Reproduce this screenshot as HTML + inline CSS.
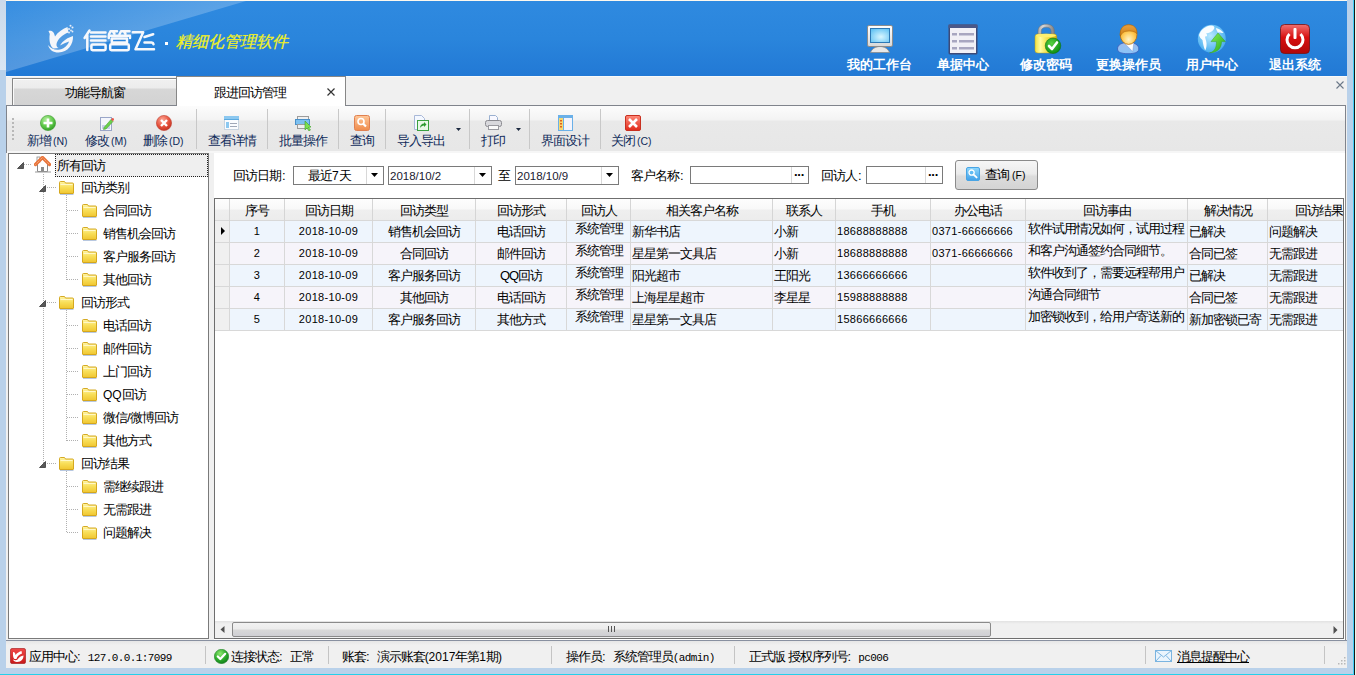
<!DOCTYPE html>
<html><head><meta charset="utf-8">
<style>
*{margin:0;padding:0;box-sizing:border-box}
html,body{width:1356px;height:675px;overflow:hidden;background:#f0f0f0;font-family:"Liberation Sans",sans-serif;font-size:12px;color:#000}
.a{position:absolute}
.t{position:absolute;line-height:12px;white-space:nowrap;font-size:13px;letter-spacing:-1px}
.L{letter-spacing:0}
.tb{font-size:10.5px;letter-spacing:0px;margin-left:2px}
.m{font-family:"Liberation Mono",monospace;font-size:11px;letter-spacing:-0.6px}
.d{font-family:"Liberation Sans",sans-serif;font-size:11px;letter-spacing:0.3px}
</style></head><body>
<!-- window strips -->
<div class="a" style="left:0;top:0;width:6px;height:675px;background:#b9d1ea"></div>
<div class="a" style="left:0;top:0;width:6px;height:70px;background:linear-gradient(#cad9ea,#d9e6f3)"></div>
<div class="a" style="left:1347px;top:0;width:9px;height:675px;background:#b9d1ea"></div>
<div class="a" style="left:1353px;top:0;width:1px;height:675px;background:#40d0f8"></div><div class="a" style="left:1354px;top:0;width:1px;height:675px;background:#181818"></div><div class="a" style="left:1355px;top:0;width:1px;height:675px;background:#e8f8ec"></div>
<div class="a" style="left:0;top:674px;width:1353px;height:1px;background:#24d0ea"></div>
<div class="a" style="left:6px;top:0;width:1341px;height:1px;background:#fdf8ee"></div>

<!-- header -->
<div id="hdr" class="a" style="left:6px;top:1px;width:1341px;height:75px;background:linear-gradient(#2f8ae0,#2a85dc 50%,#2279d5);overflow:hidden">
<svg class="a" style="left:0;top:0" width="1341" height="75">
<defs><linearGradient id="sh" gradientUnits="userSpaceOnUse" x1="120" y1="35.5" x2="100.7" y2="-29.8"><stop offset="0" stop-color="#fff" stop-opacity="0.22"/><stop offset="1" stop-color="#fff" stop-opacity="0.04"/></linearGradient></defs>
<polygon points="0,0 240,0 0,71" fill="url(#sh)"/>
</svg>
</div>

<!-- logo -->
<svg class="a" style="left:44px;top:22px" width="36" height="34" viewBox="0 0 36 34">
<path fill="#f4f6fa" d="M4.5,9 C7.5,8.2 10,9.5 11,14.5 C14,10 19,6.5 23.5,5 L24.5,10.5 C18.5,12.5 13.5,17 12.5,22 C12.3,24.5 13.3,25.8 15,26 L9.5,26.5 C6,24.5 4.8,18 5.8,12 Z"/>
<path fill="#f4f6fa" d="M16,23.5 C19,18.5 24,15.5 29,14 C29.5,22 24,30.5 14.5,30.5 C9,30.5 5.5,28 4,23 C7,27 11,28.2 16,27.5 C21,26.5 24,22.5 25,19.5 C22,20.5 19,22 16,23.5 Z"/>
<circle cx="26.5" cy="3.8" r="1" fill="#e8eef8"/><circle cx="28.5" cy="5.5" r="1" fill="#e8eef8"/><circle cx="25" cy="7" r="1" fill="#e8eef8"/><circle cx="27" cy="8.5" r="0.9" fill="#e8eef8"/><circle cx="28.5" cy="9.5" r="0.9" fill="#e8eef8"/><circle cx="25" cy="10.5" r="0.9" fill="#e8eef8"/>
</svg>
<svg class="a" style="left:80px;top:26px" width="80" height="28" viewBox="0 0 80 28">
<g fill="none" stroke="#f6f8fc" stroke-width="2.5" stroke-linecap="round" stroke-linejoin="round">
<path d="M9.5,4.5 L4.6,12"/><path d="M7.3,9.5 V24"/>
<path d="M11,6.5 H25.5 M11,10.5 H25.5 M11,14.4 H25.5"/>
<rect x="11.4" y="18.4" width="14.2" height="5.8" rx="1.2"/>
<path d="M29,8.2 L30.5,5.2 H37 M33,5.5 L34.5,8"/>
<path d="M39.5,8.2 L41,5.2 H49.5 M44,5.5 L45.5,8"/>
<path d="M28.8,12 V9.8 H50 V12"/>
<path d="M31.8,12.6 H47 V16.6 H31.8 Z"/>
<rect x="30.2" y="18.2" width="18.6" height="6" rx="1.2"/>
<path d="M52.8,6.2 H63.2 L55.5,23.3 H74"/>
<path d="M64.5,11 L73.2,8.2"/><path d="M64.5,16.6 L71.5,16.6 Q73.3,16.8 73.5,18.2"/>
</g></svg>
<div class="a" style="left:165px;top:42px;width:3px;height:3px;background:#fff"></div>
<div class="t" style="left:176px;top:34px;font-size:16px;line-height:16px;color:#f2f21e;font-style:italic;letter-spacing:0;-webkit-text-stroke:0.25px #f2f21e">精细化管理软件</div>

<!-- header buttons -->
<svg class="a" style="left:864px;top:23px" width="32" height="32" viewBox="0 0 32 32">
<defs><radialGradient id="scr" cx="0.55" cy="0.6" r="0.7"><stop offset="0" stop-color="#d8f6ff"/><stop offset="1" stop-color="#66c4f4"/></radialGradient>
<linearGradient id="frm" x1="0" y1="0" x2="0" y2="1"><stop offset="0" stop-color="#ffffff"/><stop offset="1" stop-color="#d8d8d8"/></linearGradient></defs>
<path d="M6.5,29.5 C8,25.5 12,23.5 16,23.5 C20,23.5 24,25.5 25.5,29.5 Z" fill="#e8e8e8" stroke="#8a8a8a" stroke-width="0.8"/>
<rect x="3.5" y="2.5" width="25" height="21" rx="1.5" fill="url(#frm)" stroke="#8c8c8c"/>
<rect x="6" y="5" width="20" height="15" fill="#2c79b6"/>
<rect x="7" y="6" width="18" height="13" fill="url(#scr)"/>
</svg>
<div class="t" style="left:847px;top:59px;color:#fff;font-weight:bold;letter-spacing:0px">我的工作台</div>

<svg class="a" style="left:947px;top:23px" width="32" height="32" viewBox="0 0 32 32">
<rect x="1.5" y="1.5" width="29" height="30" rx="1.5" fill="#3d4a78"/>
<rect x="3" y="5" width="26" height="25" fill="#f1f0f6"/>
<rect x="5" y="10" width="5" height="2.5" fill="#a8a6c0"/><rect x="12" y="10" width="15" height="2.5" fill="#a8a6c0"/>
<rect x="5" y="17" width="5" height="2.5" fill="#a8a6c0"/><rect x="12" y="17" width="15" height="2.5" fill="#a8a6c0"/>
<rect x="5" y="24" width="5" height="2.5" fill="#a8a6c0"/><rect x="12" y="24" width="15" height="2.5" fill="#a8a6c0"/>
<rect x="1.5" y="1.5" width="29" height="3.5" fill="#4b5888"/>
</svg>
<div class="t" style="left:937px;top:59px;color:#fff;font-weight:bold;letter-spacing:0px">单据中心</div>

<svg class="a" style="left:1032px;top:23px" width="32" height="32" viewBox="0 0 32 32">
<defs><linearGradient id="lk" x1="0" y1="0" x2="1" y2="0"><stop offset="0" stop-color="#f0e040"/><stop offset="0.25" stop-color="#fffca0"/><stop offset="0.6" stop-color="#f2dc40"/><stop offset="1" stop-color="#d8b010"/></linearGradient>
<linearGradient id="shk" x1="0" y1="0" x2="1" y2="0"><stop offset="0" stop-color="#a8a8a8"/><stop offset="0.3" stop-color="#d8d8d8"/><stop offset="1" stop-color="#808080"/></linearGradient>
<radialGradient id="gc" cx="0.4" cy="0.35" r="0.7"><stop offset="0" stop-color="#58d040"/><stop offset="1" stop-color="#0a8a10"/></radialGradient></defs>
<path d="M6,14 L6,8.5 C6,3.5 9.5,1.2 14.2,1.2 C19,1.2 22.4,3.5 22.4,8.5 L22.4,14 L19.2,14 L19.2,8.5 C19.2,5.5 17.5,4.2 14.2,4.2 C11,4.2 9.2,5.5 9.2,8.5 L9.2,14 Z" fill="url(#shk)" stroke="#707070" stroke-width="0.5"/>
<path d="M3,13.5 Q3,11 6,11 L22,11 Q24.7,11 24.7,13.5 L24.7,27.5 Q24.7,30 22,30 L6,30 Q3,30 3,27.5 Z" fill="url(#lk)" stroke="#c0a010" stroke-width="0.5"/>
<ellipse cx="14" cy="12.5" rx="10" ry="1.8" fill="#fff070"/>
<circle cx="21" cy="22.8" r="7.8" fill="url(#gc)" stroke="#0a6a10" stroke-width="0.5"/>
<path d="M17,23 L20,26 L25,19.5" fill="none" stroke="#fff" stroke-width="2.6" stroke-linecap="round" stroke-linejoin="round"/>
</svg>
<div class="t" style="left:1020px;top:59px;color:#fff;font-weight:bold;letter-spacing:0px">修改密码</div>

<svg class="a" style="left:1112px;top:23px" width="32" height="32" viewBox="0 0 32 32">
<defs><radialGradient id="fc" cx="0.5" cy="0.75" r="0.65"><stop offset="0" stop-color="#fff4c8"/><stop offset="0.6" stop-color="#ffc850"/><stop offset="1" stop-color="#f0a020"/></radialGradient>
<linearGradient id="bd" x1="0" y1="0" x2="0" y2="1"><stop offset="0" stop-color="#a0bcec"/><stop offset="1" stop-color="#88c4f8"/></linearGradient>
<linearGradient id="hr" x1="0" y1="0" x2="0" y2="1"><stop offset="0" stop-color="#e8a040"/><stop offset="1" stop-color="#d08010"/></linearGradient></defs>
<path d="M5.5,26 C5.5,21.5 10,19.5 16,19.5 C22,19.5 26.8,21.5 26.8,26 C26.8,29.5 22,30.7 16,30.7 C10,30.7 5.5,29.5 5.5,26 Z" fill="url(#bd)" stroke="#3a5ab8" stroke-width="0.8"/>
<path d="M12.3,20 L21.8,20 L20.7,28.5 Z" fill="#fff" stroke="#6a8ad0" stroke-width="0.4"/>
<ellipse cx="16.6" cy="11.6" rx="8.4" ry="9.8" fill="url(#fc)" stroke="#b87010" stroke-width="0.8"/>
<path d="M8.3,13 C7.5,5 11.5,1.8 16.6,1.8 C22,1.8 25.2,5 25,10.5 C23,8.5 19,7.5 15,8.2 C12,8 10,10 8.3,13 Z" fill="url(#hr)" stroke="#a86008" stroke-width="0.5"/>
</svg>
<div class="t" style="left:1096px;top:59px;color:#fff;font-weight:bold;letter-spacing:0px">更换操作员</div>

<svg class="a" style="left:1196px;top:23px" width="32" height="32" viewBox="0 0 32 32">
<defs><radialGradient id="gl" cx="0.45" cy="0.4" r="0.7"><stop offset="0" stop-color="#b8e8ff"/><stop offset="0.7" stop-color="#5cb8f2"/><stop offset="1" stop-color="#3a9ee8"/></radialGradient>
<linearGradient id="ar" x1="0" y1="0" x2="1" y2="1"><stop offset="0" stop-color="#8cf05a"/><stop offset="1" stop-color="#20a818"/></linearGradient></defs>
<circle cx="15.8" cy="15.8" r="14" fill="url(#gl)"/>
<path d="M3,12 C5,6 10,3 15,2.5 C18,2.5 19,4 18,6 C16,9 13,10 10,10.5 C12,12 11,14 9,13.5 C9.5,17 11,19 10.5,23 C10,26 9.5,27.5 9,27 C7.5,24 7,20 6.5,17 C5,16 3.5,14 3,12 Z" fill="#fff" opacity="0.95"/>
<path d="M20,5 C23,5.5 26,7.5 27.5,10 C26,10.5 24,9 22,9.5 C21,8 20,6.5 20,5 Z" fill="#fff" opacity="0.9"/>
<path d="M13.5,29.8 C19,29 20.5,24 20.5,18.6 L15,18.6 L22,10 L29.4,18.6 L25.5,18.6 C25.5,25 22,29.5 13.5,29.8 Z" fill="url(#ar)" stroke="#3aa024" stroke-width="0.5"/>
</svg>
<div class="t" style="left:1186px;top:59px;color:#fff;font-weight:bold;letter-spacing:0px">用户中心</div>

<svg class="a" style="left:1279px;top:23px" width="32" height="32" viewBox="0 0 32 32">
<defs><linearGradient id="pw" x1="0" y1="0" x2="0" y2="1"><stop offset="0" stop-color="#f07070"/><stop offset="0.45" stop-color="#d81010"/><stop offset="1" stop-color="#b00808"/></linearGradient></defs>
<rect x="1.5" y="1.5" width="29" height="29" rx="4" fill="url(#pw)" stroke="#7a1010" stroke-width="0.8"/>
<path d="M10.5,11 A8,8 0 1 0 21.5,11" fill="none" stroke="#fff" stroke-width="3"/>
<rect x="14.5" y="5" width="3" height="11" rx="1" fill="#fff"/>
</svg>
<div class="t" style="left:1269px;top:59px;color:#fff;font-weight:bold;letter-spacing:0px">退出系统</div>

<!-- tabs -->
<div class="a" style="left:6px;top:76px;width:1341px;height:1px;background:#f9f9f9"></div>
<div class="a" style="left:12px;top:78px;width:165px;height:28px;border:1px solid #878787;border-bottom:none;background:linear-gradient(#f0f0f0 0,#ececec 9px,#d7d7d7 10px,#d2d2d2 27px)">
 <div class="a" style="left:0;top:0;width:163px;height:1px;background:#fff"></div>
 <div class="a" style="left:0;top:0;width:1px;height:27px;background:#fafafa"></div>
</div>
<div class="t" style="left:65px;top:87px">功能导航窗</div>
<div class="a" style="left:176px;top:76px;width:170px;height:30px;border:1px solid #878787;border-bottom:none;background:#fff"></div>
<div class="t" style="left:214px;top:87px">跟进回访管理</div>
<svg class="a" style="left:326px;top:87px" width="10" height="10"><path d="M1.5,1.5 L8.5,8.5 M8.5,1.5 L1.5,8.5" stroke="#333" stroke-width="1.2"/></svg>
<svg class="a" style="left:1335px;top:80px" width="10" height="10"><path d="M1.5,1.5 L8.5,8.5 M8.5,1.5 L1.5,8.5" stroke="#6b7888" stroke-width="1.1"/></svg>

<!-- toolbar -->
<div class="a" style="left:6px;top:105px;width:1340px;height:48px;border:1px solid #80848c;border-bottom:none;background:linear-gradient(#fcfcfc 0,#f3f3f3 14px,#e9e9e9 15px,#e7e7e7 45px)"></div>
<div class="a" style="left:177px;top:105px;width:168px;height:1px;background:#fff"></div>
<div class="a" style="left:7px;top:151px;width:1338px;height:2px;background:#f6f6f6"></div>
<div class="a" style="left:12px;top:118px;width:2px;height:24px;background:repeating-linear-gradient(#b8b8b8 0,#b8b8b8 2px,transparent 2px,transparent 4px)"></div>
<div class="a" style="left:196px;top:109px;width:1px;height:40px;background:#c8c8c8"></div>
<div class="a" style="left:267px;top:109px;width:1px;height:40px;background:#c8c8c8"></div>
<div class="a" style="left:338px;top:109px;width:1px;height:40px;background:#c8c8c8"></div>
<div class="a" style="left:385px;top:109px;width:1px;height:40px;background:#c8c8c8"></div>
<div class="a" style="left:469px;top:109px;width:1px;height:40px;background:#c8c8c8"></div>
<div class="a" style="left:529px;top:109px;width:1px;height:40px;background:#c8c8c8"></div>
<div class="a" style="left:600px;top:109px;width:1px;height:40px;background:#c8c8c8"></div>

<!-- toolbar buttons -->
<svg class="a" style="left:40px;top:115px" width="16" height="16" viewBox="0 0 16 16">
<defs><radialGradient id="gp" cx="0.4" cy="0.3" r="0.75"><stop offset="0" stop-color="#b6f0a0"/><stop offset="0.6" stop-color="#5cc646"/><stop offset="1" stop-color="#2f9a24"/></radialGradient></defs>
<circle cx="8" cy="8" r="7.6" fill="url(#gp)" stroke="#3a9a2c" stroke-width="0.6"/>
<path d="M8,3.5 V12.5 M3.5,8 H12.5" stroke="#fff" stroke-width="2.6"/>
</svg>
<svg class="a" style="left:99px;top:116px" width="16" height="16" viewBox="0 0 16 16">
<rect x="1.5" y="1.5" width="11" height="13" fill="#f4f6fc" stroke="#9aa6c8"/>
<rect x="3" y="9" width="8" height="4" fill="#c8d0ea"/>
<path d="M5,11.5 L12,3.5 L14,5.5 L7,13 L4.5,13.5 Z" fill="#6cd04c" stroke="#3c9a2a" stroke-width="0.5"/>
<path d="M12,3.5 L13,2.3 Q14,1.6 14.8,2.6 Q15.4,3.5 14.6,4.3 L14,5.5 Z" fill="#e8584a"/>
</svg>
<svg class="a" style="left:156px;top:115px" width="16" height="16" viewBox="0 0 16 16">
<defs><radialGradient id="rd" cx="0.4" cy="0.3" r="0.75"><stop offset="0" stop-color="#ffa898"/><stop offset="0.6" stop-color="#e4503a"/><stop offset="1" stop-color="#c03020"/></radialGradient></defs>
<circle cx="8" cy="8" r="7.6" fill="url(#rd)" stroke="#c04030" stroke-width="0.6"/>
<path d="M5,5 L11,11 M11,5 L5,11" stroke="#fff" stroke-width="2.4"/>
</svg>
<svg class="a" style="left:223px;top:115px" width="16" height="16" viewBox="0 0 16 16">
<rect x="1.5" y="1.5" width="14" height="13" fill="#fafcff" stroke="#c8d4e0"/>
<rect x="1" y="1" width="15" height="4" fill="#8cc8f0"/><rect x="1" y="4" width="15" height="1" fill="#5aaae0"/>
<rect x="3" y="7" width="3" height="6" fill="#8cc8f0"/>
<rect x="7" y="8" width="7" height="1" fill="#a0a8b8"/><rect x="7" y="11" width="7" height="1" fill="#a0a8b8"/>
</svg>
<svg class="a" style="left:295px;top:115px" width="17" height="16" viewBox="0 0 17 16">
<rect x="2.5" y="1.5" width="11" height="4" fill="#f0f0f0" stroke="#9c9c9c"/>
<rect x="0.5" y="4.5" width="14" height="5" fill="#7cc0f0" stroke="#4a90c8"/>
<rect x="2.5" y="9.5" width="11" height="4" fill="#f0f0f0" stroke="#9c9c9c"/>
<path d="M10,6 L10,15 L12,13 L14,16 L15.5,15 L13.5,12.5 L16,12 Z" fill="#7ce050" stroke="#3aa02a" stroke-width="0.6"/>
</svg>
<svg class="a" style="left:354px;top:115px" width="16" height="16" viewBox="0 0 16 16">
<defs><linearGradient id="og" x1="0" y1="0" x2="0" y2="1"><stop offset="0" stop-color="#ffc89a"/><stop offset="1" stop-color="#ef8a4a"/></linearGradient></defs>
<rect x="0.5" y="0.5" width="15" height="15" rx="2" fill="url(#og)" stroke="#e08050"/>
<circle cx="7" cy="6.5" r="3" fill="none" stroke="#fff" stroke-width="1.6"/>
<path d="M9,8.5 L12,11.5" stroke="#fff" stroke-width="2.2"/>
</svg>
<svg class="a" style="left:413px;top:115px" width="16" height="16" viewBox="0 0 16 16">
<path d="M1.5,0.5 H8.5 L11.5,3.5 V14.5 H1.5 Z" fill="#f4f8ff" stroke="#a8b8d8"/>
<rect x="4.5" y="5.5" width="11" height="10" fill="#e8f8e8" stroke="#3aa040"/>
<path d="M7,13 C7,10 9,8.5 11,8.5 V7 L13.5,9.5 L11,12 V10.5 C9.5,10.5 8,11.5 7,13 Z" fill="#2c9a30"/>
</svg>
<svg class="a" style="left:456px;top:128px" width="6" height="3"><path d="M0,0 H5 L2.5,3 Z" fill="#1d2a40"/></svg>
<svg class="a" style="left:485px;top:115px" width="17" height="16" viewBox="0 0 17 16">
<path d="M4.5,0.5 H10.5 L12.5,2.5 V6 H4.5 Z" fill="#f8f8ff" stroke="#9ab0d0"/>
<rect x="0.5" y="5.5" width="16" height="6" rx="2" fill="#d8d8dc" stroke="#8a8a90"/>
<rect x="3.5" y="10.5" width="10" height="4" fill="#fafafa" stroke="#9a9aa0"/>
</svg>
<svg class="a" style="left:516px;top:128px" width="6" height="3"><path d="M0,0 H5 L2.5,3 Z" fill="#1d2a40"/></svg>
<svg class="a" style="left:558px;top:115px" width="16" height="16" viewBox="0 0 16 16">
<rect x="0.5" y="0.5" width="14" height="15" fill="#f4f4fc" stroke="#6ab0e8"/>
<rect x="1" y="1" width="13" height="2" fill="#6ab0e8"/>
<rect x="1" y="3" width="4" height="12" fill="#f8d870"/>
<rect x="2" y="5" width="2" height="1.5" fill="#e06020"/><rect x="2" y="8" width="2" height="1.5" fill="#e06020"/><rect x="2" y="11" width="2" height="1.5" fill="#e06020"/>
<rect x="5" y="3" width="1" height="12" fill="#6ab0e8"/>
</svg>
<svg class="a" style="left:625px;top:115px" width="16" height="16" viewBox="0 0 16 16">
<defs><linearGradient id="cx" x1="0" y1="0" x2="0" y2="1"><stop offset="0" stop-color="#ff8a7a"/><stop offset="1" stop-color="#e02a1a"/></linearGradient></defs>
<rect x="0.5" y="0.5" width="15" height="15" rx="1.5" fill="url(#cx)" stroke="#c83020"/>
<path d="M4,4 L12,12 M12,4 L4,12" stroke="#fff" stroke-width="2.6"/>
</svg>
<div class="t" style="left:27px;top:135px;color:#0f2b5a">新增<span class="tb">(N)</span></div>
<div class="t" style="left:85px;top:135px;color:#0f2b5a">修改<span class="tb">(M)</span></div>
<div class="t" style="left:143px;top:135px;color:#0f2b5a">删除<span class="tb">(D)</span></div>
<div class="t" style="left:208px;top:135px;color:#0f2b5a">查看详情</div>
<div class="t" style="left:279px;top:135px;color:#0f2b5a">批量操作</div>
<div class="t" style="left:350px;top:135px;color:#0f2b5a">查询</div>
<div class="t" style="left:397px;top:135px;color:#0f2b5a">导入导出</div>
<div class="t" style="left:481px;top:135px;color:#0f2b5a">打印</div>
<div class="t" style="left:541px;top:135px;color:#0f2b5a">界面设计</div>
<div class="t" style="left:611px;top:135px;color:#0f2b5a">关闭<span class="tb">(C)</span></div>

<!-- tree panel -->
<svg width="0" height="0" style="position:absolute"><defs><linearGradient id="fd" x1="0" y1="0" x2="0" y2="1"><stop offset="0" stop-color="#fff5a8"/><stop offset="0.5" stop-color="#f8de58"/><stop offset="1" stop-color="#f0c630"/></linearGradient></defs></svg>
<div class="a" style="left:8px;top:153px;width:201px;height:486px;border:1px solid #7a7a7a;background:#fff"></div>
<div class="a" style="left:55px;top:154px;width:153px;height:23px;border:1px dotted #202020;background:#efefef"></div>
<svg class="a" style="left:34px;top:156px" width="17" height="17" viewBox="0 0 17 17">
<path d="M3.5,6 V15.5 H13.5 V6" fill="#fff" stroke="#8a8a8a"/>
<rect x="7" y="11" width="3" height="5" fill="#8a8a8a"/>
<rect x="3" y="1" width="3" height="5" fill="#fff" stroke="#8a8a8a" stroke-width="0.8"/>
<path d="M1.5,8.5 L8.5,1.5 L15.5,8.5" fill="none" stroke="#e8743a" stroke-width="3.2" stroke-linejoin="round" stroke-linecap="round"/>
<path d="M1.5,8.5 L8.5,1.5 L15.5,8.5" fill="none" stroke="#ffb890" stroke-width="1" stroke-dasharray="1 1"/>
<rect x="1" y="15.5" width="16" height="1" fill="#9a9a9a"/>
</svg>
<div class="t" style="left:57px;top:160px">所有回访</div>
<svg class="a" style="left:17px;top:162px" width="7" height="7"><path d="M6.5,0.5 V6.5 H0.5 Z" fill="#595959" stroke="#3a3a3a" stroke-width="0.8" stroke-linejoin="round"/></svg><div class="a" style="left:24px;top:164px;width:8px;height:1px;background:repeating-linear-gradient(90deg,#b0b0b0 0,#b0b0b0 1px,transparent 1px,transparent 2px)"></div>
<div class="a" style="left:43px;top:174px;width:1px;height:290px;background:repeating-linear-gradient(#b0b0b0 0,#b0b0b0 1px,transparent 1px,transparent 2px)"></div>
<svg class="a" style="left:39px;top:185px" width="7" height="7"><path d="M6.5,0.5 V6.5 H0.5 Z" fill="#595959" stroke="#3a3a3a" stroke-width="0.8" stroke-linejoin="round"/></svg><div class="a" style="left:47px;top:187px;width:9px;height:1px;background:repeating-linear-gradient(90deg,#b0b0b0 0,#b0b0b0 1px,transparent 1px,transparent 2px)"></div>
<svg class="a" style="left:59px;top:181px" width="15" height="14" viewBox="0 0 15 14"><defs></defs><path d="M0.5,1.5 Q0.5,0.5 1.5,0.5 H5.5 L6.5,2 H13.5 Q14.5,2 14.5,3 V12 Q14.5,12.5 14,12.5 H1 Q0.5,12.5 0.5,12 Z" fill="url(#fd)" stroke="#d0a010" stroke-width="0.9"/><rect x="1.5" y="3" width="12" height="1" fill="#fff8c8"/><rect x="1" y="13" width="13.5" height="1" fill="#b8c8e0"/></svg><div class="t" style="left:81px;top:182px">回访类别</div>
<div class="a" style="left:67px;top:210px;width:12px;height:1px;background:repeating-linear-gradient(90deg,#b0b0b0 0,#b0b0b0 1px,transparent 1px,transparent 2px)"></div>
<svg class="a" style="left:82px;top:204px" width="15" height="14" viewBox="0 0 15 14"><defs></defs><path d="M0.5,1.5 Q0.5,0.5 1.5,0.5 H5.5 L6.5,2 H13.5 Q14.5,2 14.5,3 V12 Q14.5,12.5 14,12.5 H1 Q0.5,12.5 0.5,12 Z" fill="url(#fd)" stroke="#d0a010" stroke-width="0.9"/><rect x="1.5" y="3" width="12" height="1" fill="#fff8c8"/><rect x="1" y="13" width="13.5" height="1" fill="#b8c8e0"/></svg><div class="t" style="left:103px;top:205px">合同回访</div>
<div class="a" style="left:67px;top:233px;width:12px;height:1px;background:repeating-linear-gradient(90deg,#b0b0b0 0,#b0b0b0 1px,transparent 1px,transparent 2px)"></div>
<svg class="a" style="left:82px;top:227px" width="15" height="14" viewBox="0 0 15 14"><defs></defs><path d="M0.5,1.5 Q0.5,0.5 1.5,0.5 H5.5 L6.5,2 H13.5 Q14.5,2 14.5,3 V12 Q14.5,12.5 14,12.5 H1 Q0.5,12.5 0.5,12 Z" fill="url(#fd)" stroke="#d0a010" stroke-width="0.9"/><rect x="1.5" y="3" width="12" height="1" fill="#fff8c8"/><rect x="1" y="13" width="13.5" height="1" fill="#b8c8e0"/></svg><div class="t" style="left:103px;top:228px">销售机会回访</div>
<div class="a" style="left:67px;top:256px;width:12px;height:1px;background:repeating-linear-gradient(90deg,#b0b0b0 0,#b0b0b0 1px,transparent 1px,transparent 2px)"></div>
<svg class="a" style="left:82px;top:250px" width="15" height="14" viewBox="0 0 15 14"><defs></defs><path d="M0.5,1.5 Q0.5,0.5 1.5,0.5 H5.5 L6.5,2 H13.5 Q14.5,2 14.5,3 V12 Q14.5,12.5 14,12.5 H1 Q0.5,12.5 0.5,12 Z" fill="url(#fd)" stroke="#d0a010" stroke-width="0.9"/><rect x="1.5" y="3" width="12" height="1" fill="#fff8c8"/><rect x="1" y="13" width="13.5" height="1" fill="#b8c8e0"/></svg><div class="t" style="left:103px;top:251px">客户服务回访</div>
<div class="a" style="left:67px;top:279px;width:12px;height:1px;background:repeating-linear-gradient(90deg,#b0b0b0 0,#b0b0b0 1px,transparent 1px,transparent 2px)"></div>
<svg class="a" style="left:82px;top:273px" width="15" height="14" viewBox="0 0 15 14"><defs></defs><path d="M0.5,1.5 Q0.5,0.5 1.5,0.5 H5.5 L6.5,2 H13.5 Q14.5,2 14.5,3 V12 Q14.5,12.5 14,12.5 H1 Q0.5,12.5 0.5,12 Z" fill="url(#fd)" stroke="#d0a010" stroke-width="0.9"/><rect x="1.5" y="3" width="12" height="1" fill="#fff8c8"/><rect x="1" y="13" width="13.5" height="1" fill="#b8c8e0"/></svg><div class="t" style="left:103px;top:274px">其他回访</div>
<svg class="a" style="left:39px;top:300px" width="7" height="7"><path d="M6.5,0.5 V6.5 H0.5 Z" fill="#595959" stroke="#3a3a3a" stroke-width="0.8" stroke-linejoin="round"/></svg><div class="a" style="left:47px;top:302px;width:9px;height:1px;background:repeating-linear-gradient(90deg,#b0b0b0 0,#b0b0b0 1px,transparent 1px,transparent 2px)"></div>
<svg class="a" style="left:59px;top:296px" width="15" height="14" viewBox="0 0 15 14"><defs></defs><path d="M0.5,1.5 Q0.5,0.5 1.5,0.5 H5.5 L6.5,2 H13.5 Q14.5,2 14.5,3 V12 Q14.5,12.5 14,12.5 H1 Q0.5,12.5 0.5,12 Z" fill="url(#fd)" stroke="#d0a010" stroke-width="0.9"/><rect x="1.5" y="3" width="12" height="1" fill="#fff8c8"/><rect x="1" y="13" width="13.5" height="1" fill="#b8c8e0"/></svg><div class="t" style="left:81px;top:297px">回访形式</div>
<div class="a" style="left:67px;top:325px;width:12px;height:1px;background:repeating-linear-gradient(90deg,#b0b0b0 0,#b0b0b0 1px,transparent 1px,transparent 2px)"></div>
<svg class="a" style="left:82px;top:319px" width="15" height="14" viewBox="0 0 15 14"><defs></defs><path d="M0.5,1.5 Q0.5,0.5 1.5,0.5 H5.5 L6.5,2 H13.5 Q14.5,2 14.5,3 V12 Q14.5,12.5 14,12.5 H1 Q0.5,12.5 0.5,12 Z" fill="url(#fd)" stroke="#d0a010" stroke-width="0.9"/><rect x="1.5" y="3" width="12" height="1" fill="#fff8c8"/><rect x="1" y="13" width="13.5" height="1" fill="#b8c8e0"/></svg><div class="t" style="left:103px;top:320px">电话回访</div>
<div class="a" style="left:67px;top:348px;width:12px;height:1px;background:repeating-linear-gradient(90deg,#b0b0b0 0,#b0b0b0 1px,transparent 1px,transparent 2px)"></div>
<svg class="a" style="left:82px;top:342px" width="15" height="14" viewBox="0 0 15 14"><defs></defs><path d="M0.5,1.5 Q0.5,0.5 1.5,0.5 H5.5 L6.5,2 H13.5 Q14.5,2 14.5,3 V12 Q14.5,12.5 14,12.5 H1 Q0.5,12.5 0.5,12 Z" fill="url(#fd)" stroke="#d0a010" stroke-width="0.9"/><rect x="1.5" y="3" width="12" height="1" fill="#fff8c8"/><rect x="1" y="13" width="13.5" height="1" fill="#b8c8e0"/></svg><div class="t" style="left:103px;top:343px">邮件回访</div>
<div class="a" style="left:67px;top:371px;width:12px;height:1px;background:repeating-linear-gradient(90deg,#b0b0b0 0,#b0b0b0 1px,transparent 1px,transparent 2px)"></div>
<svg class="a" style="left:82px;top:365px" width="15" height="14" viewBox="0 0 15 14"><defs></defs><path d="M0.5,1.5 Q0.5,0.5 1.5,0.5 H5.5 L6.5,2 H13.5 Q14.5,2 14.5,3 V12 Q14.5,12.5 14,12.5 H1 Q0.5,12.5 0.5,12 Z" fill="url(#fd)" stroke="#d0a010" stroke-width="0.9"/><rect x="1.5" y="3" width="12" height="1" fill="#fff8c8"/><rect x="1" y="13" width="13.5" height="1" fill="#b8c8e0"/></svg><div class="t" style="left:103px;top:366px">上门回访</div>
<div class="a" style="left:67px;top:394px;width:12px;height:1px;background:repeating-linear-gradient(90deg,#b0b0b0 0,#b0b0b0 1px,transparent 1px,transparent 2px)"></div>
<svg class="a" style="left:82px;top:388px" width="15" height="14" viewBox="0 0 15 14"><defs></defs><path d="M0.5,1.5 Q0.5,0.5 1.5,0.5 H5.5 L6.5,2 H13.5 Q14.5,2 14.5,3 V12 Q14.5,12.5 14,12.5 H1 Q0.5,12.5 0.5,12 Z" fill="url(#fd)" stroke="#d0a010" stroke-width="0.9"/><rect x="1.5" y="3" width="12" height="1" fill="#fff8c8"/><rect x="1" y="13" width="13.5" height="1" fill="#b8c8e0"/></svg><div class="t" style="left:103px;top:389px"><span class="L" style="font-size:12px">QQ</span>回访</div>
<div class="a" style="left:67px;top:417px;width:12px;height:1px;background:repeating-linear-gradient(90deg,#b0b0b0 0,#b0b0b0 1px,transparent 1px,transparent 2px)"></div>
<svg class="a" style="left:82px;top:411px" width="15" height="14" viewBox="0 0 15 14"><defs></defs><path d="M0.5,1.5 Q0.5,0.5 1.5,0.5 H5.5 L6.5,2 H13.5 Q14.5,2 14.5,3 V12 Q14.5,12.5 14,12.5 H1 Q0.5,12.5 0.5,12 Z" fill="url(#fd)" stroke="#d0a010" stroke-width="0.9"/><rect x="1.5" y="3" width="12" height="1" fill="#fff8c8"/><rect x="1" y="13" width="13.5" height="1" fill="#b8c8e0"/></svg><div class="t" style="left:103px;top:412px">微信/微博回访</div>
<div class="a" style="left:67px;top:440px;width:12px;height:1px;background:repeating-linear-gradient(90deg,#b0b0b0 0,#b0b0b0 1px,transparent 1px,transparent 2px)"></div>
<svg class="a" style="left:82px;top:434px" width="15" height="14" viewBox="0 0 15 14"><defs></defs><path d="M0.5,1.5 Q0.5,0.5 1.5,0.5 H5.5 L6.5,2 H13.5 Q14.5,2 14.5,3 V12 Q14.5,12.5 14,12.5 H1 Q0.5,12.5 0.5,12 Z" fill="url(#fd)" stroke="#d0a010" stroke-width="0.9"/><rect x="1.5" y="3" width="12" height="1" fill="#fff8c8"/><rect x="1" y="13" width="13.5" height="1" fill="#b8c8e0"/></svg><div class="t" style="left:103px;top:435px">其他方式</div>
<svg class="a" style="left:39px;top:461px" width="7" height="7"><path d="M6.5,0.5 V6.5 H0.5 Z" fill="#595959" stroke="#3a3a3a" stroke-width="0.8" stroke-linejoin="round"/></svg><div class="a" style="left:47px;top:463px;width:9px;height:1px;background:repeating-linear-gradient(90deg,#b0b0b0 0,#b0b0b0 1px,transparent 1px,transparent 2px)"></div>
<svg class="a" style="left:59px;top:457px" width="15" height="14" viewBox="0 0 15 14"><defs></defs><path d="M0.5,1.5 Q0.5,0.5 1.5,0.5 H5.5 L6.5,2 H13.5 Q14.5,2 14.5,3 V12 Q14.5,12.5 14,12.5 H1 Q0.5,12.5 0.5,12 Z" fill="url(#fd)" stroke="#d0a010" stroke-width="0.9"/><rect x="1.5" y="3" width="12" height="1" fill="#fff8c8"/><rect x="1" y="13" width="13.5" height="1" fill="#b8c8e0"/></svg><div class="t" style="left:81px;top:458px">回访结果</div>
<div class="a" style="left:67px;top:486px;width:12px;height:1px;background:repeating-linear-gradient(90deg,#b0b0b0 0,#b0b0b0 1px,transparent 1px,transparent 2px)"></div>
<svg class="a" style="left:82px;top:480px" width="15" height="14" viewBox="0 0 15 14"><defs></defs><path d="M0.5,1.5 Q0.5,0.5 1.5,0.5 H5.5 L6.5,2 H13.5 Q14.5,2 14.5,3 V12 Q14.5,12.5 14,12.5 H1 Q0.5,12.5 0.5,12 Z" fill="url(#fd)" stroke="#d0a010" stroke-width="0.9"/><rect x="1.5" y="3" width="12" height="1" fill="#fff8c8"/><rect x="1" y="13" width="13.5" height="1" fill="#b8c8e0"/></svg><div class="t" style="left:103px;top:481px">需继续跟进</div>
<div class="a" style="left:67px;top:509px;width:12px;height:1px;background:repeating-linear-gradient(90deg,#b0b0b0 0,#b0b0b0 1px,transparent 1px,transparent 2px)"></div>
<svg class="a" style="left:82px;top:503px" width="15" height="14" viewBox="0 0 15 14"><defs></defs><path d="M0.5,1.5 Q0.5,0.5 1.5,0.5 H5.5 L6.5,2 H13.5 Q14.5,2 14.5,3 V12 Q14.5,12.5 14,12.5 H1 Q0.5,12.5 0.5,12 Z" fill="url(#fd)" stroke="#d0a010" stroke-width="0.9"/><rect x="1.5" y="3" width="12" height="1" fill="#fff8c8"/><rect x="1" y="13" width="13.5" height="1" fill="#b8c8e0"/></svg><div class="t" style="left:103px;top:504px">无需跟进</div>
<div class="a" style="left:67px;top:532px;width:12px;height:1px;background:repeating-linear-gradient(90deg,#b0b0b0 0,#b0b0b0 1px,transparent 1px,transparent 2px)"></div>
<svg class="a" style="left:82px;top:526px" width="15" height="14" viewBox="0 0 15 14"><defs></defs><path d="M0.5,1.5 Q0.5,0.5 1.5,0.5 H5.5 L6.5,2 H13.5 Q14.5,2 14.5,3 V12 Q14.5,12.5 14,12.5 H1 Q0.5,12.5 0.5,12 Z" fill="url(#fd)" stroke="#d0a010" stroke-width="0.9"/><rect x="1.5" y="3" width="12" height="1" fill="#fff8c8"/><rect x="1" y="13" width="13.5" height="1" fill="#b8c8e0"/></svg><div class="t" style="left:103px;top:527px">问题解决</div>
<div class="a" style="left:66px;top:195px;width:1px;height:85px;background:repeating-linear-gradient(#b0b0b0 0,#b0b0b0 1px,transparent 1px,transparent 2px)"></div>
<div class="a" style="left:66px;top:310px;width:1px;height:131px;background:repeating-linear-gradient(#b0b0b0 0,#b0b0b0 1px,transparent 1px,transparent 2px)"></div>
<div class="a" style="left:66px;top:471px;width:1px;height:62px;background:repeating-linear-gradient(#b0b0b0 0,#b0b0b0 1px,transparent 1px,transparent 2px)"></div>

<!-- right panel filter -->
<div class="a" style="left:214px;top:153px;width:1132px;height:488px;background:#fff;border-right:1px solid #8a8a8a;border-bottom:1px solid #8a8a8a"></div>
<div class="t" style="left:233px;top:170px">回访日期<span style="margin-left:1px">:</span></div>
<div class="a" style="left:293px;top:166px;width:91px;height:19px;border:1px solid #7a7a7a;background:#fff"></div>
<div class="a" style="left:366px;top:167px;width:1px;height:17px;background:#d8d8d8"></div>
<div class="t" style="left:308px;top:170px">最近<span style="font-size:12px;letter-spacing:0">7</span>天</div>
<svg class="a" style="left:371px;top:173px" width="7" height="4"><path d="M0,0 H7 L3.5,4 Z" fill="#000"/></svg>
<div class="a" style="left:388px;top:166px;width:104px;height:19px;border:1px solid #7a7a7a;background:#fff"></div>
<div class="a" style="left:474px;top:167px;width:1px;height:17px;background:#d8d8d8"></div>
<div class="t" style="left:390px;top:170px;font-size:11.5px;letter-spacing:0;color:#1a1a30">2018/10/2</div>
<svg class="a" style="left:479px;top:173px" width="7" height="4"><path d="M0,0 H7 L3.5,4 Z" fill="#000"/></svg>
<div class="t" style="left:498px;top:170px">至</div>
<div class="a" style="left:515px;top:166px;width:104px;height:19px;border:1px solid #7a7a7a;background:#fff"></div>
<div class="a" style="left:601px;top:167px;width:1px;height:17px;background:#d8d8d8"></div>
<div class="t" style="left:517px;top:170px;font-size:11.5px;letter-spacing:0;color:#1a1a30">2018/10/9</div>
<svg class="a" style="left:606px;top:173px" width="7" height="4"><path d="M0,0 H7 L3.5,4 Z" fill="#000"/></svg>
<div class="t" style="left:631px;top:170px">客户名称<span style="margin-left:1px">:</span></div>
<div class="a" style="left:690px;top:166px;width:119px;height:18px;border:1px solid #7a7a7a;background:#fff"></div>
<div class="a" style="left:791px;top:167px;width:1px;height:16px;background:#d8d8d8"></div>
<div class="t" style="left:794px;top:169px;font-weight:bold;letter-spacing:-1px">···</div>
<div class="t" style="left:821px;top:170px">回访人<span style="margin-left:1px">:</span></div>
<div class="a" style="left:866px;top:166px;width:77px;height:18px;border:1px solid #7a7a7a;background:#fff"></div>
<div class="a" style="left:925px;top:167px;width:1px;height:16px;background:#d8d8d8"></div>
<div class="t" style="left:928px;top:169px;font-weight:bold;letter-spacing:-1px">···</div>
<div class="a" style="left:955px;top:160px;width:83px;height:30px;border:1px solid #8a8a8a;border-radius:3px;background:linear-gradient(#f6f6f6,#ebebeb 45%,#dcdcdc 55%,#d4d4d4)"></div>
<svg class="a" style="left:966px;top:167px" width="14" height="14" viewBox="0 0 14 14">
<defs><linearGradient id="sb" x1="0" y1="0" x2="0" y2="1"><stop offset="0" stop-color="#90d8fc"/><stop offset="1" stop-color="#40a0e8"/></linearGradient></defs>
<rect x="0.5" y="0.5" width="13" height="13" rx="1.5" fill="url(#sb)" stroke="#48a4e4"/>
<circle cx="5.6" cy="5.6" r="2.6" fill="#60bcf4" stroke="#fff" stroke-width="1.3"/>
<path d="M7.6,7.6 L10.6,10.4" stroke="#fff" stroke-width="1.9" stroke-linecap="round"/>
</svg>
<div class="t" style="left:985px;top:169px">查询<span class="tb" style="margin-left:3px">(F)</span></div>

<!-- grid -->
<div class="a" style="left:214px;top:198px;width:1130px;height:441px;border:1px solid #6e6e6e;background:#fff;overflow:hidden">
<div class="a" style="left:0;top:0;width:1128px;height:22px;background:linear-gradient(#fdfdfd 0,#f8f8f8 10px,#efefef 11px,#ececec 21px,#d8d8d8 21px)"></div>
<div class="a" style="left:14px;top:0;width:1px;height:22px;background:#d5d5d5"></div>
<div class="t" style="left:15px;top:6px;width:54px;text-align:center">序号</div>
<div class="a" style="left:69px;top:0;width:1px;height:22px;background:#d5d5d5"></div>
<div class="t" style="left:70px;top:6px;width:87px;text-align:center">回访日期</div>
<div class="a" style="left:157px;top:0;width:1px;height:22px;background:#d5d5d5"></div>
<div class="t" style="left:158px;top:6px;width:102px;text-align:center">回访类型</div>
<div class="a" style="left:260px;top:0;width:1px;height:22px;background:#d5d5d5"></div>
<div class="t" style="left:261px;top:6px;width:90px;text-align:center">回访形式</div>
<div class="a" style="left:351px;top:0;width:1px;height:22px;background:#d5d5d5"></div>
<div class="t" style="left:352px;top:6px;width:63px;text-align:center">回访人</div>
<div class="a" style="left:415px;top:0;width:1px;height:22px;background:#d5d5d5"></div>
<div class="t" style="left:416px;top:6px;width:141px;text-align:center">相关客户名称</div>
<div class="a" style="left:557px;top:0;width:1px;height:22px;background:#d5d5d5"></div>
<div class="t" style="left:558px;top:6px;width:62px;text-align:center">联系人</div>
<div class="a" style="left:620px;top:0;width:1px;height:22px;background:#d5d5d5"></div>
<div class="t" style="left:621px;top:6px;width:94px;text-align:center">手机</div>
<div class="a" style="left:715px;top:0;width:1px;height:22px;background:#d5d5d5"></div>
<div class="t" style="left:716px;top:6px;width:94px;text-align:center">办公电话</div>
<div class="a" style="left:810px;top:0;width:1px;height:22px;background:#d5d5d5"></div>
<div class="t" style="left:811px;top:6px;width:161px;text-align:center">回访事由</div>
<div class="a" style="left:972px;top:0;width:1px;height:22px;background:#d5d5d5"></div>
<div class="t" style="left:973px;top:6px;width:79px;text-align:center">解决情况</div>
<div class="a" style="left:1052px;top:0;width:1px;height:22px;background:#d5d5d5"></div>
<div class="t" style="left:1053px;top:6px;width:102px;text-align:center">回访结果</div>
<div class="a" style="left:0;top:22px;width:14px;height:110px;background:#f0f0f0"></div>
<div class="a" style="left:15px;top:22px;width:1113px;height:21px;background:#eef5fd"></div>
<div class="a" style="left:0;top:43px;width:1128px;height:1px;background:#d8d8d8"></div>
<div class="t d" style="left:15px;top:26px;width:54px;text-align:center">1</div>
<div class="t d" style="left:70px;top:26px;width:87px;text-align:center">2018-10-09</div>
<div class="t" style="left:158px;top:27px;width:102px;text-align:center">销售机会回访</div>
<div class="t" style="left:261px;top:27px;width:90px;text-align:center">电话回访</div>
<div class="t" style="left:352px;top:24px;width:63px;text-align:center">系统管理</div>
<div class="t" style="left:417px;top:27px">新华书店</div>
<div class="t" style="left:559px;top:27px">小新</div>
<div class="t d" style="left:622px;top:26px">18688888888</div>
<div class="t d" style="left:717px;top:26px">0371-66666666</div>
<div class="t" style="left:813px;top:24px">软件试用情况如何，试用过程</div>
<div class="t" style="left:974px;top:27px">已解决</div>
<div class="t" style="left:1054px;top:27px">问题解决</div>
<div class="a" style="left:15px;top:44px;width:1113px;height:21px;background:#f6f4fa"></div>
<div class="a" style="left:0;top:65px;width:1128px;height:1px;background:#d8d8d8"></div>
<div class="t d" style="left:15px;top:48px;width:54px;text-align:center">2</div>
<div class="t d" style="left:70px;top:48px;width:87px;text-align:center">2018-10-09</div>
<div class="t" style="left:158px;top:49px;width:102px;text-align:center">合同回访</div>
<div class="t" style="left:261px;top:49px;width:90px;text-align:center">邮件回访</div>
<div class="t" style="left:352px;top:46px;width:63px;text-align:center">系统管理</div>
<div class="t" style="left:417px;top:49px">星星第一文具店</div>
<div class="t" style="left:559px;top:49px">小新</div>
<div class="t d" style="left:622px;top:48px">18688888888</div>
<div class="t d" style="left:717px;top:48px">0371-66666666</div>
<div class="t" style="left:813px;top:46px">和客户沟通签约合同细节。</div>
<div class="t" style="left:974px;top:49px">合同已签</div>
<div class="t" style="left:1054px;top:49px">无需跟进</div>
<div class="a" style="left:15px;top:66px;width:1113px;height:21px;background:#eef5fd"></div>
<div class="a" style="left:0;top:87px;width:1128px;height:1px;background:#d8d8d8"></div>
<div class="t d" style="left:15px;top:70px;width:54px;text-align:center">3</div>
<div class="t d" style="left:70px;top:70px;width:87px;text-align:center">2018-10-09</div>
<div class="t" style="left:158px;top:71px;width:102px;text-align:center">客户服务回访</div>
<div class="t" style="left:261px;top:71px;width:90px;text-align:center">QQ回访</div>
<div class="t" style="left:352px;top:68px;width:63px;text-align:center">系统管理</div>
<div class="t" style="left:417px;top:71px">阳光超市</div>
<div class="t" style="left:559px;top:71px">王阳光</div>
<div class="t d" style="left:622px;top:70px">13666666666</div>
<div class="t" style="left:813px;top:68px">软件收到了，需要远程帮用户</div>
<div class="t" style="left:974px;top:71px">已解决</div>
<div class="t" style="left:1054px;top:71px">无需跟进</div>
<div class="a" style="left:15px;top:88px;width:1113px;height:21px;background:#f6f4fa"></div>
<div class="a" style="left:0;top:109px;width:1128px;height:1px;background:#d8d8d8"></div>
<div class="t d" style="left:15px;top:92px;width:54px;text-align:center">4</div>
<div class="t d" style="left:70px;top:92px;width:87px;text-align:center">2018-10-09</div>
<div class="t" style="left:158px;top:93px;width:102px;text-align:center">其他回访</div>
<div class="t" style="left:261px;top:93px;width:90px;text-align:center">电话回访</div>
<div class="t" style="left:352px;top:90px;width:63px;text-align:center">系统管理</div>
<div class="t" style="left:417px;top:93px">上海星星超市</div>
<div class="t" style="left:559px;top:93px">李星星</div>
<div class="t d" style="left:622px;top:92px">15988888888</div>
<div class="t" style="left:813px;top:90px">沟通合同细节</div>
<div class="t" style="left:974px;top:93px">合同已签</div>
<div class="t" style="left:1054px;top:93px">无需跟进</div>
<div class="a" style="left:15px;top:110px;width:1113px;height:21px;background:#eef5fd"></div>
<div class="a" style="left:0;top:131px;width:1128px;height:1px;background:#d8d8d8"></div>
<div class="t d" style="left:15px;top:114px;width:54px;text-align:center">5</div>
<div class="t d" style="left:70px;top:114px;width:87px;text-align:center">2018-10-09</div>
<div class="t" style="left:158px;top:115px;width:102px;text-align:center">客户服务回访</div>
<div class="t" style="left:261px;top:115px;width:90px;text-align:center">其他方式</div>
<div class="t" style="left:352px;top:112px;width:63px;text-align:center">系统管理</div>
<div class="t" style="left:417px;top:115px">星星第一文具店</div>
<div class="t d" style="left:622px;top:114px">15866666666</div>
<div class="t" style="left:813px;top:112px">加密锁收到，给用户寄送新的</div>
<div class="t" style="left:974px;top:115px">新加密锁已寄</div>
<div class="t" style="left:1054px;top:115px">无需跟进</div>
<div class="a" style="left:14px;top:22px;width:1px;height:110px;background:#d8d8d8"></div>
<div class="a" style="left:69px;top:22px;width:1px;height:110px;background:#d8d8d8"></div>
<div class="a" style="left:157px;top:22px;width:1px;height:110px;background:#d8d8d8"></div>
<div class="a" style="left:260px;top:22px;width:1px;height:110px;background:#d8d8d8"></div>
<div class="a" style="left:351px;top:22px;width:1px;height:110px;background:#d8d8d8"></div>
<div class="a" style="left:415px;top:22px;width:1px;height:110px;background:#d8d8d8"></div>
<div class="a" style="left:557px;top:22px;width:1px;height:110px;background:#d8d8d8"></div>
<div class="a" style="left:620px;top:22px;width:1px;height:110px;background:#d8d8d8"></div>
<div class="a" style="left:715px;top:22px;width:1px;height:110px;background:#d8d8d8"></div>
<div class="a" style="left:810px;top:22px;width:1px;height:110px;background:#d8d8d8"></div>
<div class="a" style="left:972px;top:22px;width:1px;height:110px;background:#d8d8d8"></div>
<div class="a" style="left:1052px;top:22px;width:1px;height:110px;background:#d8d8d8"></div>
<svg class="a" style="left:6px;top:28px" width="4" height="8"><path d="M0,0 L4,4 L0,8 Z" fill="#000"/></svg>
<div class="a" style="left:0;top:422px;width:1128px;height:17px;background:linear-gradient(#e2e2e2,#f0f0f0 3px,#f0f0f0)"></div>
<svg class="a" style="left:5px;top:427px" width="5" height="7"><path d="M4.5,0 V7 L0.5,3.5 Z" fill="#505050"/></svg>
<svg class="a" style="left:1118px;top:427px" width="5" height="8"><path d="M0.5,0 V8 L4.5,4 Z" fill="#505050"/></svg>
<div class="a" style="left:17px;top:423px;width:759px;height:15px;border:1px solid #8a8a8a;border-radius:2px;background:linear-gradient(#f2f2f2,#ececec 45%,#d8d8d8 55%,#cfcfd4)"></div>
<div class="a" style="left:393px;top:427px;width:7px;height:6px;background:repeating-linear-gradient(90deg,#555 0,#555 1px,transparent 1px,transparent 3px)"></div>
</div>
<!-- status bar -->
<div class="a" style="left:6px;top:640px;width:1341px;height:1px;background:#8890a0"></div>
<div class="a" style="left:6px;top:641px;width:1341px;height:27px;background:linear-gradient(#e6e6e6,#f0f0f0 4px,#f0f0f0)"></div>
<div class="a" style="left:0;top:668px;width:1353px;height:6px;background:#b9d1ea"></div>
<svg class="a" style="left:10px;top:648px" width="16" height="16" viewBox="0 0 16 16">
<defs><linearGradient id="lr" x1="0" y1="0" x2="0" y2="1"><stop offset="0" stop-color="#f04848"/><stop offset="1" stop-color="#c81818"/></linearGradient></defs>
<rect x="0.5" y="0.5" width="15" height="15" rx="1.5" fill="url(#lr)" stroke="#a01010" stroke-width="0.6"/>
<path d="M3,4 C4.5,4 5.5,5 5.5,7 C7,5 9.5,3.5 11.5,3 L12,5.5 C9,6.5 7,8.5 6.5,11 L4.5,11 C3,10 2.8,7 3,4 Z" fill="#fff"/>
<path d="M7.5,11.5 C9,9 11,8 13.5,7.5 C13.5,11 11.5,14 7,14 C5,14 3.5,13 3,11.5 C5,12.5 6.5,12.5 7.5,11.5 Z" fill="#fff"/>
</svg>
<div class="t" style="left:29px;top:651px">应用中心:<span class="m" style="margin-left:8px">127.0.0.1:7099</span></div>
<svg class="a" style="left:214px;top:649px" width="15" height="15" viewBox="0 0 15 15">
<defs><radialGradient id="ck" cx="0.4" cy="0.3" r="0.75"><stop offset="0" stop-color="#8ee870"/><stop offset="0.6" stop-color="#2aa82a"/><stop offset="1" stop-color="#0f7a18"/></radialGradient></defs>
<circle cx="7.5" cy="7.5" r="7.2" fill="url(#ck)" stroke="#1a7a20" stroke-width="0.5"/>
<path d="M3.8,7.5 L6.3,10 L11.2,4.8" fill="none" stroke="#fff" stroke-width="2.2" stroke-linecap="round" stroke-linejoin="round"/>
</svg>
<div class="t" style="left:231px;top:651px">连接状态:<span style="margin-left:8px">正常</span></div>
<div class="t" style="left:342px;top:651px">账套:<span style="margin-left:8px">演示账套<span class="L" style="font-size:12px">(2017</span>年第<span class="L" style="font-size:12px">1</span>期<span class="L" style="font-size:12px">)</span></span></div>
<div class="t" style="left:566px;top:651px">操作员:<span style="margin-left:8px">系统管理员</span><span class="m">(admin)</span></div>
<div class="t" style="left:749px;top:651px">正式版 授权序列号:<span class="m" style="margin-left:8px">pc006</span></div>
<svg class="a" style="left:1155px;top:650px" width="17" height="12" viewBox="0 0 17 12">
<rect x="0.5" y="0.5" width="16" height="11" fill="#eaf4fd" stroke="#7ab4e0"/>
<path d="M0.5,0.5 L8.5,7 L16.5,0.5 M0.5,11.5 L6,5.5 M16.5,11.5 L11,5.5" fill="none" stroke="#7ab4e0"/>
</svg>
<div class="t" style="left:1177px;top:651px;text-decoration:underline">消息提醒中心</div>
<div class="a" style="left:205px;top:646px;width:1px;height:18px;background:#c4c4c4"></div>
<div class="a" style="left:328px;top:646px;width:1px;height:18px;background:#c4c4c4"></div>
<div class="a" style="left:551px;top:646px;width:1px;height:18px;background:#c4c4c4"></div>
<div class="a" style="left:734px;top:646px;width:1px;height:18px;background:#c4c4c4"></div>
<div class="a" style="left:1145px;top:646px;width:1px;height:18px;background:#c4c4c4"></div>
<div class="a" style="left:1324px;top:646px;width:1px;height:18px;background:#c4c4c4"></div>
<svg class="a" style="left:1337px;top:656px" width="10" height="10"><g fill="#b8b8b8"><rect x="7" y="1" width="1.5" height="1.5"/><rect x="4" y="4" width="1.5" height="1.5"/><rect x="7" y="4" width="1.5" height="1.5"/><rect x="1" y="7" width="1.5" height="1.5"/><rect x="4" y="7" width="1.5" height="1.5"/><rect x="7" y="7" width="1.5" height="1.5"/></g></svg>
</body></html>
